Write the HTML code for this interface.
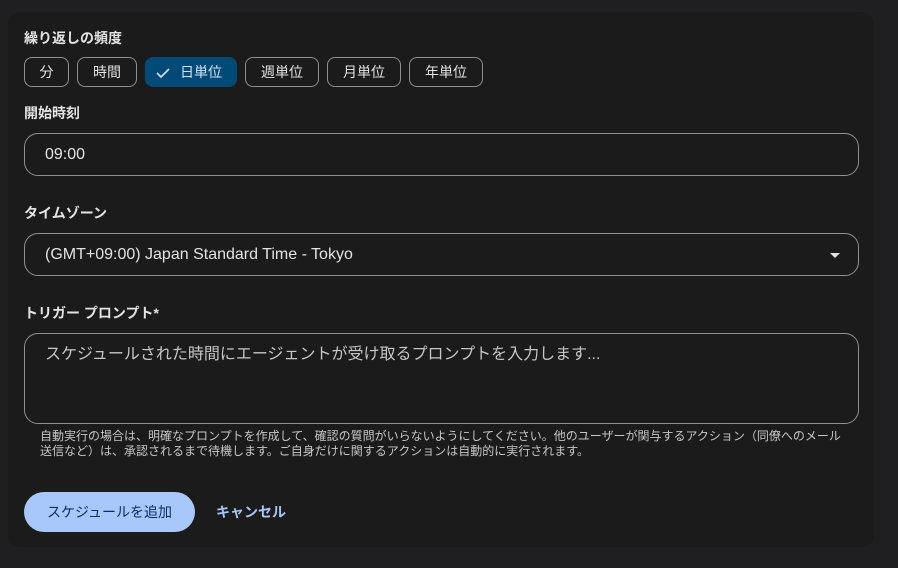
<!DOCTYPE html>
<html><head><meta charset="utf-8"><style>
*{box-sizing:border-box;margin:0;padding:0}
body{width:898px;height:568px;background:#1f1f21;font-family:"Liberation Sans","Noto Sans CJK JP",sans-serif;color:#e3e3e3;position:relative;overflow:hidden}
.card{position:absolute;left:8px;top:12px;width:866px;height:535px;background:#1b1b1b;border-radius:12px}
.lbl{position:absolute;left:24px;font-size:14px;font-weight:bold;color:#e3e3e3;line-height:16px}
.chip{position:absolute;top:57px;height:30px;border:1px solid #8e918f;border-radius:8px;font-size:14px;line-height:28px;text-align:center;color:#e3e3e3}
.chip.on{background:#004a77;border-color:#004a77;color:#d3e3fd}
.field{position:absolute;left:24px;width:835px;border:1px solid #8e918f;border-radius:14px;font-size:16px;color:#e3e3e3;padding-left:20px}
.help{position:absolute;left:40px;top:429px;width:810px;font-size:12px;line-height:15px;color:#c4c7c5}
.btn{position:absolute;left:24px;top:492px;width:171px;height:40px;border-radius:20px;background:#a8c7fa;color:#062e6f;font-size:14px;line-height:40px;text-align:center}
.cancel{position:absolute;left:216px;top:492px;line-height:40px;font-size:14px;color:#a8c7fa;font-weight:bold}
</style></head><body>
<div class="card"></div>
<div class="lbl" style="top:30px">繰り返しの頻度</div>
<div class="chip" style="left:24px;width:45px">分</div>
<div class="chip" style="left:77px;width:60px">時間</div>
<div class="chip on" style="left:145px;width:92px"><svg width="14" height="12" viewBox="0 0 14 12" style="position:absolute;left:10px;top:9px"><path d="M1 6 L5 10 L13 2" stroke="#d3e3fd" stroke-width="1.6" fill="none"/></svg><span style="margin-left:20px">日単位</span></div>
<div class="chip" style="left:245px;width:74px">週単位</div>
<div class="chip" style="left:327px;width:74px">月単位</div>
<div class="chip" style="left:409px;width:74px">年単位</div>
<div class="lbl" style="top:105px">開始時刻</div>
<div class="field" style="top:133px;height:43px;line-height:41px">09:00</div>
<div class="lbl" style="top:205px">タイムゾーン</div>
<div class="field" style="top:233px;height:43px;line-height:41px">(GMT+09:00) Japan Standard Time - Tokyo
<div style="position:absolute;right:18px;top:19px;width:0;height:0;border-left:5px solid transparent;border-right:5px solid transparent;border-top:5px solid #e3e3e3"></div></div>
<div class="lbl" style="top:305px">トリガー プロンプト*</div>
<div class="field" style="top:333px;height:91px;padding-top:10px;line-height:22px;color:#c4c7c5">スケジュールされた時間にエージェントが受け取るプロンプトを入力します...</div>
<div class="help">自動実行の場合は、明確なプロンプトを作成して、確認の質問がいらないようにしてください。他のユーザーが関与するアクション（同僚へのメール送信など）は、承認されるまで待機します。ご自身だけに関するアクションは自動的に実行されます。</div>
<div class="btn">スケジュールを追加</div>
<div class="cancel">キャンセル</div>
</body></html>
